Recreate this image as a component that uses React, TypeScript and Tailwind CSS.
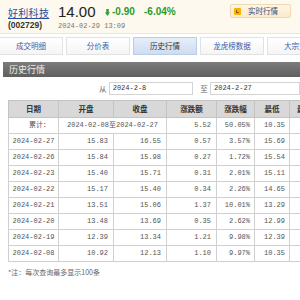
import React from "react";

const rows = [
  ["2024-02-27", "15.83", "16.55", "0.57", "3.57%", "15.69"],
  ["2024-02-26", "15.84", "15.98", "0.27", "1.72%", "15.54"],
  ["2024-02-23", "15.40", "15.71", "0.31", "2.01%", "15.11"],
  ["2024-02-22", "15.17", "15.40", "0.34", "2.26%", "14.65"],
  ["2024-02-21", "13.51", "15.06", "1.37", "10.01%", "13.29"],
  ["2024-02-20", "13.48", "13.69", "0.35", "2.62%", "12.99"],
  ["2024-02-19", "12.39", "13.34", "1.21", "9.98%", "12.39"],
  ["2024-02-08", "10.92", "12.13", "1.10", "9.97%", "10.35"],
];

const tabs = ["成交明细", "分价表", "历史行情", "龙虎榜数据", "大宗交易"];

const mono = "font-['Liberation_Mono','Noto_Sans_CJK_SC',monospace]";

export default function App() {
  return (
    <div className="w-[300px] h-[300px] overflow-hidden bg-white font-['Noto_Sans_CJK_SC','Liberation_Sans',sans-serif]">
      {/* header */}
      <div className="h-[34px] bg-[#fdf9ee] border-b border-[#ece6d8] flex items-start relative">
        <div className="pl-[8px] pt-[6px] flex flex-col w-[58px] shrink-0">
          <span className="text-[10px] leading-[13px] text-[#2a4f9e] underline tracking-[0.3px]">好利科技</span>
          <span className="text-[8.5px] leading-[11px] font-bold text-[#333] font-['Liberation_Sans',sans-serif] mt-[1px]">(002729)</span>
        </div>
        <div className="flex flex-col pt-[4px]">
          <div className="flex items-center">
            <span className="text-[15px] leading-[16px] text-[#222] font-['Liberation_Sans',sans-serif] w-[47px]">14.00</span>
            <svg width="5" height="7" viewBox="0 0 5 7" className="mr-[2px]">
              <rect x="1.3" y="0" width="2.4" height="3.5" fill="#2c9a2c" />
              <polygon points="0,3.2 5,3.2 2.5,7" fill="#2c9a2c" />
            </svg>
            <span className="text-[10px] leading-[16px] font-bold text-[#2c9a2c] font-['Liberation_Sans',sans-serif] w-[32px]">-0.90</span>
            <span className="text-[10px] leading-[16px] font-bold text-[#2c9a2c] font-['Liberation_Sans',sans-serif]">-6.04%</span>
          </div>
          <span className={`text-[7px] leading-[10px] text-[#777] mt-[1px] ${mono}`}>2024-02-29 13:09</span>
        </div>
        <div className="absolute left-[230px] top-[4px] w-[61px] h-[14px] border border-[#efd9b4] rounded-[2px] bg-gradient-to-b from-[#fff6e6] to-[#fbe9cb] flex items-center">
          <span className="ml-[3px] w-[7px] h-[7px] bg-[#f5b400] rounded-[1px] flex items-center justify-center">
            <span className="w-[3px] h-[3px] border-l border-b border-[#a0520a]"></span>
          </span>
          <span className="ml-[7px] text-[7.5px] leading-[10px] text-[#3a4a7a]">实时行情</span>
        </div>
      </div>

      {/* tabs */}
      <div className="mt-[3px] flex gap-[3px] ml-[-1px] h-[18px]">
        {tabs.map((t, i) => (
          <div
            key={t}
            className={`w-[64px] shrink-0 h-[18px] border flex items-center justify-center text-[7.5px] ${
              i === 2
                ? "border-[#b8cde8] bg-gradient-to-b from-[#e6eefa] to-[#cfdcf0] text-[#333]"
                : "border-[#e2e2e2] bg-gradient-to-b from-white to-[#f5f5f5] text-[#3b5ca8]"
            }`}
          >
            {t}
          </div>
        ))}
      </div>

      {/* section bar */}
      <div className="mt-[7px] ml-[3px] h-[15px] bg-gradient-to-b from-[#7c7c7c] to-[#5f5f5f] flex items-center pl-[6px]">
        <span className="text-[9px] leading-[12px] text-[#eeeeee]">历史行情</span>
      </div>

      {/* date range */}
      <div className="mt-[5px] flex items-center h-[13px]">
        <span className="ml-[99px] text-[7.5px] text-[#666] w-[10px]">从</span>
        <div className={`w-[87px] h-[13px] border border-[#d4d4d4] bg-white text-[7px] leading-[11px] pl-[3px] text-[#333] ${mono}`}>2024-2-8</div>
        <span className="ml-[7px] text-[7.5px] text-[#666] w-[10px]">至</span>
        <div className={`w-[90px] shrink-0 h-[13px] border border-[#d4d4d4] bg-white text-[7px] leading-[11px] pl-[3px] text-[#333] ${mono}`}>2024-2-27</div>
      </div>

      {/* table */}
      <table className="mt-[5px] ml-[8px] border-collapse table-fixed w-[311px]">
        <colgroup>
          <col className="w-[50px]" />
          <col className="w-[55px]" />
          <col className="w-[53px]" />
          <col className="w-[50px]" />
          <col className="w-[38px]" />
          <col className="w-[35px]" />
          <col className="w-[30px]" />
        </colgroup>
        <thead>
          <tr className="h-[17px] bg-[#d8d8d8]">
            {["日期", "开盘", "收盘", "涨跌额", "涨跌幅", "最低", "最高"].map((h) => (
              <th key={h} className="border border-[#c4c4c4] text-[7.5px] font-bold text-[#333] p-0 text-center whitespace-nowrap overflow-hidden">
                {h}
              </th>
            ))}
          </tr>
        </thead>
        <tbody className={`text-[7px] text-[#555] ${mono}`}>
          <tr className="h-[16px]">
            <td className="border border-[#d0d0d0] text-right pr-[8px] p-0">累计：</td>
            <td colSpan={2} className="border border-[#d0d0d0] text-center p-0">2024-02-08至2024-02-27</td>
            <td className="border border-[#d0d0d0] text-right pr-[5px] p-0">5.52</td>
            <td className="border border-[#d0d0d0] text-right pr-[4px] p-0">50.05%</td>
            <td className="border border-[#d0d0d0] text-right pr-[4px] p-0">10.35</td>
            <td className="border border-[#d0d0d0] p-0"></td>
          </tr>
          {rows.map((r) => (
            <tr key={r[0]} className="h-[16px]">
              <td className="border border-[#d0d0d0] text-center p-0">{r[0]}</td>
              <td className="border border-[#d0d0d0] text-right pr-[5px] p-0">{r[1]}</td>
              <td className="border border-[#d0d0d0] text-right pr-[5px] p-0">{r[2]}</td>
              <td className="border border-[#d0d0d0] text-right pr-[5px] p-0">{r[3]}</td>
              <td className="border border-[#d0d0d0] text-right pr-[4px] p-0">{r[4]}</td>
              <td className="border border-[#d0d0d0] text-right pr-[4px] p-0">{r[5]}</td>
              <td className="border border-[#d0d0d0] p-0"></td>
            </tr>
          ))}
        </tbody>
      </table>
      <div className="ml-[8px] mt-[5px] text-[7px] text-[#666]">*注：每次查询最多显示100条</div>
    </div>
  );
}
